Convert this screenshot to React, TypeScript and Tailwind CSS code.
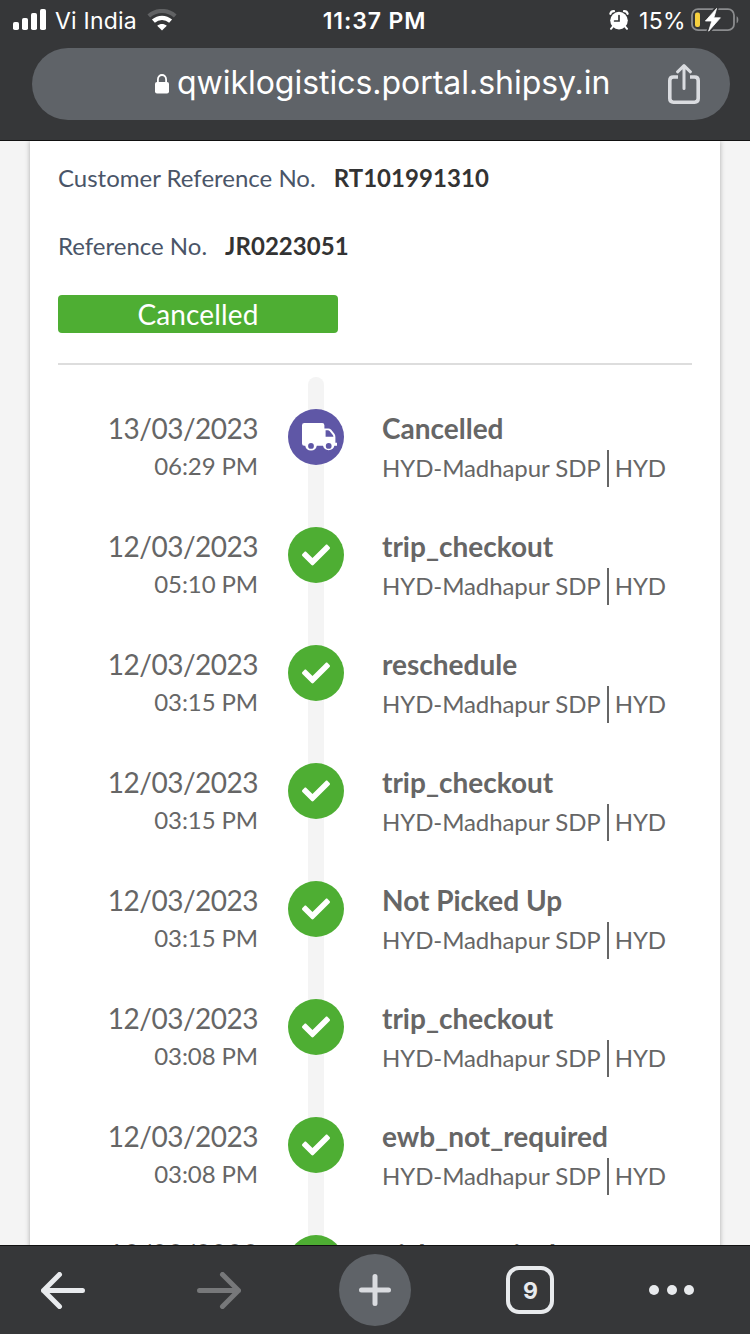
import React from 'react';
import { FaCheck } from 'react-icons/fa';

interface TrackingEvent {
  id: number;
  date: string;
  time: string;
  status: string;
  hub: string;
  city: string;
  isCurrent?: boolean;
}

const hub = 'HYD-Madhapur SDP';
const city = 'HYD';

const trackingEvents: TrackingEvent[] = [
  { id: 1, date: '13/03/2023', time: '06:29 PM', status: 'Cancelled', hub, city, isCurrent: true },
  { id: 2, date: '12/03/2023', time: '05:10 PM', status: 'trip_checkout', hub, city },
  { id: 3, date: '12/03/2023', time: '03:15 PM', status: 'reschedule', hub, city },
  { id: 4, date: '12/03/2023', time: '03:15 PM', status: 'trip_checkout', hub, city },
  { id: 5, date: '12/03/2023', time: '03:15 PM', status: 'Not Picked Up', hub, city },
  { id: 6, date: '12/03/2023', time: '03:08 PM', status: 'trip_checkout', hub, city },
  { id: 7, date: '12/03/2023', time: '03:08 PM', status: 'ewb_not_required', hub, city },
  { id: 8, date: '12/03/2023', time: '03:08 PM', status: 'pickup_arrival', hub, city },
];

const SignalIcon = () => (
  <svg width="34" height="22" viewBox="0 0 34 22" fill="#fff">
    <rect x="0" y="13" width="6" height="8" rx="1.8" />
    <rect x="9" y="9" width="6" height="12" rx="1.8" />
    <rect x="18" y="4" width="6" height="17" rx="1.8" />
    <rect x="27" y="0" width="6" height="21" rx="1.8" />
  </svg>
);

const WifiIcon = () => (
  <svg width="30" height="22" viewBox="0 0 30 22" fill="none">
    <path d="M1.8 7C9.2 0.2 20.8 0.2 28.2 7" stroke="#616264" strokeWidth="4" />
    <path d="M6.4 12.2C11.4 7.8 18.6 7.8 23.6 12.2" stroke="#fff" strokeWidth="4.4" />
    <path d="M15 21.6L10.2 16.8C13 14.3 17 14.3 19.8 16.8Z" fill="#fff" />
  </svg>
);

const AlarmIcon = () => (
  <svg width="20" height="20" viewBox="0 0 20 20" fill="none">
    <circle cx="10" cy="10.6" r="8.8" fill="#fff" />
    <path d="M1.4 3.8C1.8 2.2 3.2 1.1 5 1.2M18.6 3.8C18.2 2.2 16.8 1.1 15 1.2" stroke="#fff" strokeWidth="2.2" strokeLinecap="round" />
    <path d="M3.8 16.6L2 18.8M16.2 16.6L18 18.8" stroke="#fff" strokeWidth="2" strokeLinecap="round" />
    <path d="M10 5.6V11H5.6" stroke="#363739" strokeWidth="1.7" strokeLinecap="round" />
  </svg>
);

const BatteryIcon = () => (
  <svg width="48" height="24" viewBox="0 0 48 24" fill="none">
    <rect x="1" y="1.2" width="42" height="21" rx="6" stroke="#8b8c8e" strokeWidth="1.8" />
    <path d="M45.6 8.2C47.9 9 47.9 14.4 45.6 15.2Z" fill="#8b8c8e" />
    <rect x="4" y="4.4" width="5" height="14.6" rx="2" fill="#f6d03f" />
    <path d="M25.6 0.2L14.2 13.2H20.6L17.4 23.6L29.6 9.6H22.8Z" fill="#fff" stroke="#363739" strokeWidth="4" strokeLinejoin="round" />
    <path d="M25.6 0.4L14.4 13H20.8L17.6 23.2L29.4 9.8H22.8Z" fill="#fff" stroke="#fff" strokeWidth="0.8" strokeLinejoin="round" />
  </svg>
);

const LockIcon = () => (
  <svg width="14" height="20" viewBox="0 0 14 20" fill="none">
    <path d="M2.9 9V5.4C2.9 -0.5 11.1 -0.5 11.1 5.4V9" stroke="#fff" strokeWidth="1.8" />
    <rect x="0" y="8" width="14" height="11.6" rx="2" fill="#fff" />
  </svg>
);

const ShareIcon = () => (
  <svg width="32" height="40" viewBox="0 0 32 40" fill="none" stroke="#dadce0" strokeWidth="3.6" strokeLinecap="round" strokeLinejoin="round">
    <path d="M10 13H5.4C3.2 13 1.8 14.4 1.8 16.6V34.6C1.8 36.8 3.2 38.2 5.4 38.2H26.6C28.8 38.2 30.2 36.8 30.2 34.6V16.6C30.2 14.4 28.8 13 26.6 13H22" strokeLinecap="butt" />
    <path d="M16 24.6V2M9.6 7.8L16 1.6L22.4 7.8" strokeWidth="3" />
  </svg>
);

const TruckIcon = () => (
  <svg width="36" height="29" viewBox="0 0 36 29">
    <path
      fill="#fff"
      fillRule="evenodd"
      d="M2.4 0H20.2Q22.4 0 22.4 2.2V5.4H26.2Q28 5.4 29.2 6.7L32.2 10.6Q33.4 12 33.4 14V19.8H35V22.8H32.4A5.9 5.9 0 0 1 21 22.8H14.8A5.9 5.9 0 0 1 3.2 22.8H2.2Q0 22.8 0 20.6V2.2Q0 0 2.4 0ZM23.6 7.2V13.8H31.4Q31.4 12.8 30.6 11.8L27.8 8.2Q27 7.2 25.8 7.2ZM9 20A2.9 2.9 0 1 0 9 25.8A2.9 2.9 0 1 0 9 20ZM26.7 20A2.9 2.9 0 1 0 26.7 25.8A2.9 2.9 0 1 0 26.7 20Z"
    />
  </svg>
);

const StatusBar = () => (
  <div className="grid h-10 grid-cols-3 items-center pr-[11px] pl-[13px] text-[23px] leading-10 text-white">
    <div className="flex items-center">
      <SignalIcon />
      <span className="ml-2 pt-0.5 leading-[38px] tracking-[0.2px]">Vi India</span>
      <span className="ml-[10px]">
        <WifiIcon />
      </span>
    </div>
    <div className="pt-0.5 pr-[3px] text-center leading-[38px] font-semibold tracking-[0.9px]">
      11:37 PM
    </div>
    <div className="flex items-center justify-end">
      <AlarmIcon />
      <span className="mr-[5px] ml-2.5 pt-0.5 leading-[38px] tracking-[0.4px]">15%</span>
      <BatteryIcon />
    </div>
  </div>
);

const AddressBar = () => (
  <div className="mt-2 mr-5 ml-8 flex h-[72px] items-center rounded-full bg-[#5f6368] pr-[30px] pl-[123px]">
    <LockIcon />
    <span className="ml-2 flex-1 pb-0.5 text-[32px] leading-[70px] tracking-[-0.03px] whitespace-nowrap text-white">
      qwiklogistics.portal.shipsy.in
    </span>
    <ShareIcon />
  </div>
);

const ReferenceRow = ({ label, value }: { label: string; value: string }) => (
  <div className="flex h-[68px] items-center text-2xl">
    <span className="text-[#4a5568]">{label}</span>
    <span className="ml-[18px] font-bold tracking-[0.05px] text-[#333]">{value}</span>
  </div>
);

const EventRow = ({ event }: { event: TrackingEvent }) => (
  <div className="flex h-[118px] shrink-0 text-[#666]">
    <div className="w-[200px] text-right">
      <div className="text-[28px] leading-[38px] tracking-[-0.5px]">{event.date}</div>
      <div className="text-2xl leading-[38px] tracking-[-0.1px]">{event.time}</div>
    </div>
    <div
      className={`relative mr-[38px] ml-[30px] flex h-14 w-14 items-center justify-center rounded-full ${
        event.isCurrent ? 'bg-[#5f57a6]' : 'bg-[#4eae33]'
      }`}
    >
      {event.isCurrent ? (
        <span className="ml-2">
          <TruckIcon />
        </span>
      ) : (
        <FaCheck className="h-7 w-7 text-white" />
      )}
    </div>
    <div>
      <div className="text-[28px] leading-[38px] font-bold">{event.status}</div>
      <div className="mt-[3px] flex h-[37px] text-2xl leading-[35px] tracking-[-0.08px]">
        <span className="border-r-2 border-[#666] pr-1.5">{event.hub}</span>
        <span className="pl-1.5">{event.city}</span>
      </div>
    </div>
  </div>
);

const BottomBar = () => (
  <div className="flex h-[89px] shrink-0 items-center border-t border-[#111] bg-[#363739] pl-[41px]">
    <svg width="45" height="37" viewBox="0 0 45 37" fill="none" stroke="#e8eaed" strokeWidth="5" strokeLinecap="round" strokeLinejoin="round">
      <path d="M41.5 18.5H2.5M18.5 2.5L2.5 18.5L18.5 34.5" />
    </svg>
    <svg className="ml-[110px]" width="45" height="37" viewBox="0 0 45 37" fill="none" stroke="#77787a" strokeWidth="5" strokeLinecap="round" strokeLinejoin="round">
      <path d="M3.5 18.5H42.5M26.5 2.5L42.5 18.5L26.5 34.5" />
    </svg>
    <div className="ml-[98px] flex h-[72px] w-[72px] items-center justify-center rounded-full bg-[#5f6368]">
      <svg width="32" height="32" viewBox="0 0 32 32" stroke="#dadce0" strokeWidth="5" strokeLinecap="round">
        <path d="M2.5 16H29.5M16 2.5V29.5" />
      </svg>
    </div>
    <div className="ml-[95px] flex h-12 w-12 items-center justify-center rounded-[13px] border-4 border-[#e8eaed] pt-0.5 pl-px text-[23px] font-bold text-[#e8eaed]">
      9
    </div>
    <div className="ml-[95px] flex gap-[7.5px]">
      <span className="h-2.5 w-2.5 rounded-full bg-[#e8eaed]" />
      <span className="h-2.5 w-2.5 rounded-full bg-[#e8eaed]" />
      <span className="h-2.5 w-2.5 rounded-full bg-[#e8eaed]" />
    </div>
  </div>
);

const App: React.FC = () => {
  return (
    <div className="flex h-[1334px] w-[750px] flex-col overflow-hidden bg-[#f4f4f4] font-['Inter',sans-serif]">
      <div className="h-[141px] shrink-0 border-b border-[#111] bg-[#363739]">
        <StatusBar />
        <AddressBar />
      </div>
      <div className="min-h-0 flex-1 overflow-hidden px-[30px]">
        <div className="h-[1200px] bg-white px-7 pt-[3px] font-['Lato',sans-serif] shadow-[0_0_5px_rgba(0,0,0,0.3)]">
          <ReferenceRow label="Customer Reference No." value="RT101991310" />
          <ReferenceRow label="Reference No." value="JR0223051" />
          <div className="mt-[15px] h-[38px] w-[280px] rounded bg-[#4eae33] text-center text-[28px] leading-[39px] tracking-[0.15px] text-white">
            Cancelled
          </div>
          <div className="mt-[30px] border-t-2 border-[#ddd]" />
          <div className="relative mt-3 pt-8">
            <div className="absolute top-0 left-[250px] h-[1000px] w-4 rounded-full bg-[#f4f4f4]" />
            {trackingEvents.map((event) => (
              <EventRow key={event.id} event={event} />
            ))}
          </div>
        </div>
      </div>
      <BottomBar />
    </div>
  );
};

export default App;
